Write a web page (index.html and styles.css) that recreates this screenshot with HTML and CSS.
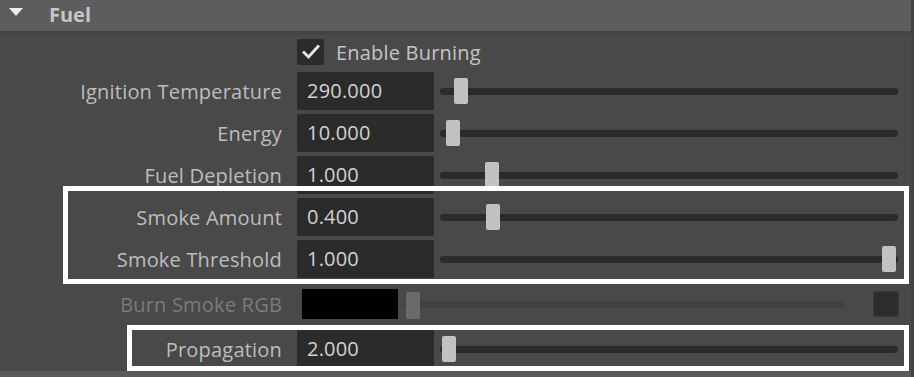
FILE: index.html
```html
<!DOCTYPE html>
<html>
  <head>
    <title>Fuel</title>
    <meta name="viewport" content="width=device-width, initial-scale=1.0" />
    <link rel="stylesheet" href="styles.css">
  </head>
  <body>
    <div class="panel">
      <!-- Section header -->
      <div class="section-header">
        <span class="arrow"></span>
        <span class="section-title">Fuel</span>
      </div>

      <div class="section-body">
        <div class="check-row">
          <span class="checkbox">
            <svg width="18" height="16" viewBox="0 0 18 16">
              <path d="M2 8.5 L6.5 13 L16 2.5" fill="none" stroke="#e6e6e6" stroke-width="2.8" stroke-linecap="square" />
            </svg>
          </span>
          <span class="check-label">Enable Burning</span>
        </div>

        <div class="row">
          <span class="label">Ignition Temperature</span>
          <span class="field">290.000</span>
          <div class="slider"><span class="thumb" style="left: 14px"></span></div>
        </div>

        <div class="row">
          <span class="label">Energy</span>
          <span class="field">10.000</span>
          <div class="slider"><span class="thumb" style="left: 6px"></span></div>
        </div>

        <div class="row">
          <span class="label">Fuel Depletion</span>
          <span class="field">1.000</span>
          <div class="slider"><span class="thumb" style="left: 45px"></span></div>
        </div>

        <div class="row">
          <span class="label">Smoke Amount</span>
          <span class="field">0.400</span>
          <div class="slider"><span class="thumb" style="left: 46px"></span></div>
        </div>

        <div class="row">
          <span class="label">Smoke Threshold</span>
          <span class="field">1.000</span>
          <div class="slider"><span class="thumb" style="left: 442px"></span></div>
        </div>

        <!-- Disabled colour row -->
        <div class="row row-disabled">
          <span class="label">Burn Smoke RGB</span>
          <span class="swatch"></span>
          <div class="slider slider-off"><span class="thumb" style="left: 2px"></span></div>
          <span class="swatch-small"></span>
        </div>

        <div class="row row-last">
          <span class="label">Propagation</span>
          <span class="field">2.000</span>
          <div class="slider"><span class="thumb" style="left: 2px"></span></div>
        </div>
      </div>

      <div class="next-header"></div>

      <!-- Highlight boxes drawn over the rows -->
      <div class="highlight highlight-smoke"></div>
      <div class="highlight highlight-propagation"></div>
    </div>
  </body>
</html>
```

FILE: styles.css
```css
body {
  margin: 0;
  background-color: #444444;
  font-family: "Open Sans", "Noto Sans", sans-serif;
  color: #bdbdbd;
  overflow: hidden;
}

.panel {
  position: relative;
  width: 911px;
  height: 377px;
}

.section-header {
  height: 31px;
  background-color: #5d5d5d;
  display: flex;
  align-items: center;
  border-bottom: 4px solid #444444;
}

.arrow {
  width: 0;
  height: 0;
  margin-left: 9px;
  margin-top: -8px;
  border-left: 7.5px solid transparent;
  border-right: 7.5px solid transparent;
  border-top: 8px solid #eeeeee;
}

.section-title {
  margin-left: 26px;
  font-size: 20px;
  font-weight: bold;
  color: #c6c6c6;
  margin-top: -3px;
}

.section-body {
  background-color: #494949;
  padding-top: 4px;
  padding-bottom: 3px;
}

.check-row {
  display: flex;
  align-items: center;
  height: 26px;
  margin-bottom: 7px;
  padding-left: 297px;
}

.checkbox {
  width: 27px;
  height: 26px;
  background-color: #2b2b2b;
  border-radius: 2px;
  display: flex;
  align-items: center;
  justify-content: center;
}

.check-label {
  margin-left: 12px;
  font-size: 20px;
  letter-spacing: 0.2px;
  color: #c4c4c4;
}

.row {
  display: flex;
  align-items: center;
  height: 38px;
  margin-bottom: 4px;
}

.label {
  width: 282px;
  margin-right: 15px;
  text-align: right;
  font-size: 20px;
  letter-spacing: 0.2px;
  color: #bdbdbd;
}

.field {
  width: 127px;
  height: 38px;
  padding-left: 10px;
  background-color: #2b2b2b;
  border-radius: 2px;
  font-size: 20px;
  letter-spacing: 0.2px;
  line-height: 38px;
  color: #d2d2d2;
}

.slider {
  position: relative;
  width: 458px;
  height: 7px;
  margin-left: 6px;
  background-color: #2b2b2b;
  border-radius: 3px;
}

.thumb {
  position: absolute;
  top: -10px;
  width: 14px;
  height: 26px;
  background-color: #c2c2c2;
  border-radius: 2px;
}

.row-disabled {
  margin-top: 7px;
  margin-bottom: 7px;
}

.row-disabled .label {
  color: #7b7b7b;
}

.swatch {
  width: 96px;
  height: 30px;
  margin-left: 5px;
  background-color: #000000;
}

.slider-off {
  width: 441px;
  margin-left: 6px;
  background-color: #404040;
}

.slider-off .thumb {
  top: -9px;
  height: 27px;
  background-color: #6a6a6a;
}

.swatch-small {
  width: 26px;
  height: 26px;
  margin-left: 28px;
  background-color: #2c2c2c;
  border: 1px solid #3a3a3a;
  box-sizing: border-box;
  border-radius: 2px;
}

.row-last {
  margin-bottom: 0;
}

.next-header {
  height: 6px;
  background-color: #5a5a5a;
}

.highlight {
  position: absolute;
  border: 5px solid #ffffff;
  box-sizing: border-box;
}

.highlight-smoke {
  left: 63px;
  top: 186px;
  width: 846px;
  height: 98px;
}

.highlight-propagation {
  left: 127px;
  top: 325px;
  width: 782px;
  height: 46px;
}
```
